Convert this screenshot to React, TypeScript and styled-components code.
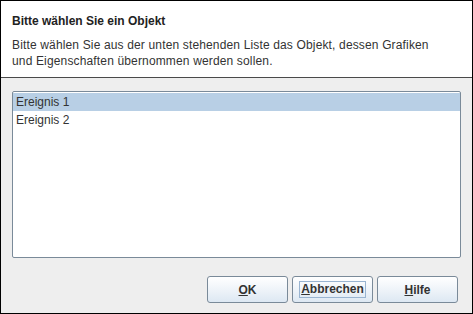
import React from "react";
import styled, { createGlobalStyle } from "styled-components";

const Global = createGlobalStyle`
  html, body { margin: 0; padding: 0; background: #eeeeee; }
  body { font-family: "Liberation Sans", Arial, sans-serif; font-size: 12px; color: #333333; }
  * { box-sizing: border-box; }
`;

const Window = styled.div`
  width: 473px;
  height: 314px;
  border: 1px solid #000000;
  background: #eeeeee;
  display: flex;
  flex-direction: column;
`;

const Header = styled.div`
  height: 77px;
  background: #ffffff;
  border-bottom: 1px solid #4a4a4a;
  padding: 13px 11px 0 11px;
`;

const Title = styled.div`
  font-weight: bold;
  font-size: 12px;
  line-height: 15px;
  color: #222222;
  margin-bottom: 8px;
`;

const Desc = styled.div`
  font-size: 12px;
  line-height: 16px;
  letter-spacing: 0.15px;
  color: #333333;
`;

const Body = styled.div`
  flex: 1;
  display: flex;
  flex-direction: column;
  padding: 13px 11px 10px 11px;
`;

const List = styled.div`
  height: 167px;
  background: #ffffff;
  border: 1px solid #7a8a99;
  border-radius: 2px;
  padding: 1px 0;
  display: flex;
  flex-direction: column;
`;

const Item = styled.div<{ $selected?: boolean }>`
  height: 18px;
  line-height: 18px;
  padding-left: 3px;
  background: ${(p) => (p.$selected ? "#b8cfe5" : "transparent")};
  color: #333333;
`;

const Buttons = styled.div`
  margin-top: auto;
  display: flex;
  justify-content: flex-end;
  gap: 4px;
  padding-right: 3px;
`;

const Button = styled.button`
  width: 81px;
  height: 27px;
  border: 1px solid #7a8a99;
  border-radius: 3px;
  background: linear-gradient(#ffffff 0%, #f2f6fa 40%, #dde8f3 100%);
  font-family: "Liberation Sans", Arial, sans-serif;
  font-size: 12px;
  font-weight: bold;
  color: #333333;
  display: flex;
  align-items: center;
  justify-content: center;
  padding: 0;
`;

const Focus = styled.span`
  border: 1px solid #99b4d1;
  padding: 1px 1px;
  line-height: 13px;
`;

const Mn = styled.span`
  text-decoration: underline;
`;

export default function App() {
  return (
    <>
      <Global />
      <Window>
        <Header>
          <Title>Bitte wählen Sie ein Objekt</Title>
          <Desc>
            Bitte wählen Sie aus der unten stehenden Liste das Objekt, dessen Grafiken
            <br />
            und Eigenschaften übernommen werden sollen.
          </Desc>
        </Header>
        <Body>
          <List>
            <Item $selected>Ereignis 1</Item>
            <Item>Ereignis 2</Item>
          </List>
          <Buttons>
            <Button>
              <span>
                <Mn>O</Mn>K
              </span>
            </Button>
            <Button>
              <Focus>
                <Mn>A</Mn>bbrechen
              </Focus>
            </Button>
            <Button>
              <span>
                <Mn>H</Mn>ilfe
              </span>
            </Button>
          </Buttons>
        </Body>
      </Window>
    </>
  );
}
